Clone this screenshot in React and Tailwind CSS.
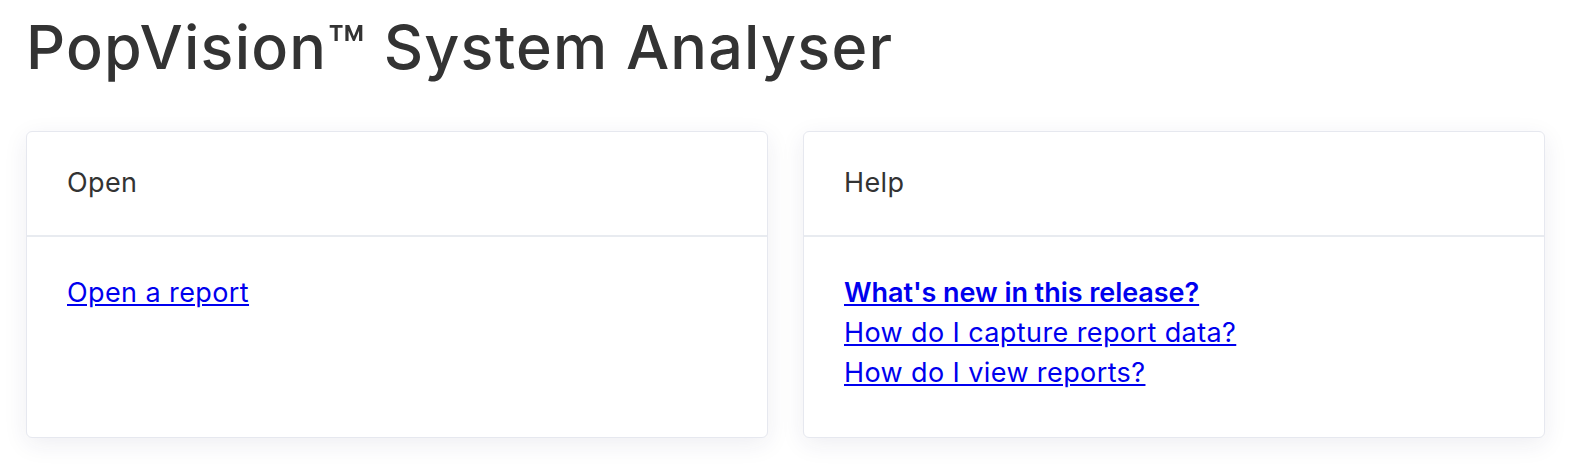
export default function App() {
  const font = { fontFamily: "Inter, 'Open Sans', 'Liberation Sans', sans-serif" };
  return (
    <div className="min-h-[466px] w-[1578px] bg-white pl-[26px] pt-[11px]" style={font}>
      <h1 className="m-0 text-[61px] font-medium leading-[72px] tracking-[1.2px] text-[#333333]">
        PopVision™ System Analyser
      </h1>
      <div className="mt-[48px] flex gap-[35px]">
        <div className="flex h-[307px] w-[742px] flex-col rounded-[6px] border border-[#e6e8ef] bg-white shadow-[0_6px_24px_rgba(40,40,90,0.08)]">
          <div className="flex h-[105px] items-center border-b-2 border-[#e8ebf0] px-[40px] text-[27px] tracking-[0.4px] text-[#333333]">
            Open
          </div>
          <div className="flex flex-col items-start px-[40px] pt-[36px] text-[27px] leading-[40px] tracking-[0.4px]">
            <a href="#" className="text-[#0000ee] underline">Open a report</a>
          </div>
        </div>
        <div className="flex h-[307px] w-[742px] flex-col rounded-[6px] border border-[#e6e8ef] bg-white shadow-[0_6px_24px_rgba(40,40,90,0.08)]">
          <div className="flex h-[105px] items-center border-b-2 border-[#e8ebf0] px-[40px] text-[27px] tracking-[0.4px] text-[#333333]">
            Help
          </div>
          <div className="flex flex-col items-start px-[40px] pt-[36px] text-[27px] leading-[40px] tracking-[0.4px]">
            <a href="#" className="font-semibold tracking-[-0.05px] text-[#0000ee] underline">What's new in this release?</a>
            <a href="#" className="text-[#0000ee] underline">How do I capture report data?</a>
            <a href="#" className="text-[#0000ee] underline">How do I view reports?</a>
          </div>
        </div>
      </div>
    </div>
  );
}
